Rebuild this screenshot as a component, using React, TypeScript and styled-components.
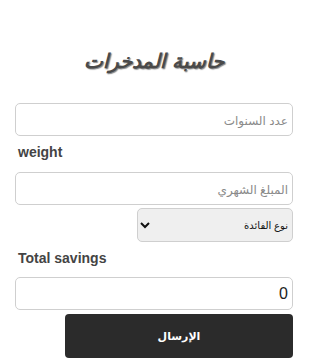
import styled, { createGlobalStyle } from "styled-components";

const GlobalStyle = createGlobalStyle`
  body {
    margin: 0;
    background: #fff;
    font-family: "Liberation Sans", "DejaVu Sans", sans-serif;
  }
`;

const Page = styled.div`
  display: flex;
  flex-direction: column;
  padding: 0 17px 0 15px;
`;

const Title = styled.h2`
  margin: 49px 0 0;
  height: 27px;
  text-align: center;
  font-size: 20px;
  font-style: italic;
  font-weight: bold;
  color: #4a4a4a;
  text-shadow: 1px 1px 1px #888;
`;

const Field = styled.input<{ $top: number }>`
  box-sizing: border-box;
  width: 100%;
  height: 33px;
  margin-top: ${(p) => p.$top}px;
  padding: 0 4px;
  border: 1px solid #cfcfcf;
  border-radius: 5px;
  background: #fff;
  font-family: "Liberation Sans", "DejaVu Sans", sans-serif;
  font-size: 16px;
  color: #222;
  text-align: right;
  outline: none;
  &::placeholder {
    font-size: 12px;
    color: #8a8a8a;
  }
`;

const Label = styled.div<{ $top: number }>`
  margin: ${(p) => p.$top}px 0 0 3px;
  height: 16px;
  line-height: 16px;
  font-size: 14px;
  font-weight: bold;
  color: #444;
`;

const Select = styled.select`
  box-sizing: border-box;
  align-self: flex-end;
  width: 156px;
  height: 34px;
  margin-top: 3px;
  border: 1px solid #cfcfcf;
  border-radius: 5px;
  background: #efefef;
  font-family: "Liberation Sans", "DejaVu Sans", sans-serif;
  font-size: 10px;
  color: #111;
`;

const Submit = styled.button`
  align-self: flex-end;
  width: 228px;
  height: 44px;
  margin-top: 4px;
  border: none;
  border-radius: 4px;
  background: #2b2b2b;
  color: #fff;
  font-family: "Liberation Sans", "DejaVu Sans", sans-serif;
  font-size: 11px;
  font-weight: bold;
`;

export default function App() {
  return (
    <>
      <GlobalStyle />
      <Page>
        <Title dir="rtl">حاسبة المدخرات</Title>
        <Field $top={27} dir="rtl" placeholder="عدد السنوات" />
        <Label $top={8}>weight</Label>
        <Field $top={12} dir="rtl" placeholder="المبلغ الشهري" />
        <Select dir="rtl" defaultValue="">
          <option value="">نوع الفائدة</option>
          <option value="simple">بسيطة</option>
          <option value="compound">مركبة</option>
        </Select>
        <Label $top={8}>Total savings</Label>
        <Field $top={11} dir="rtl" defaultValue="0" readOnly />
        <Submit>الإرسال</Submit>
      </Page>
    </>
  );
}
